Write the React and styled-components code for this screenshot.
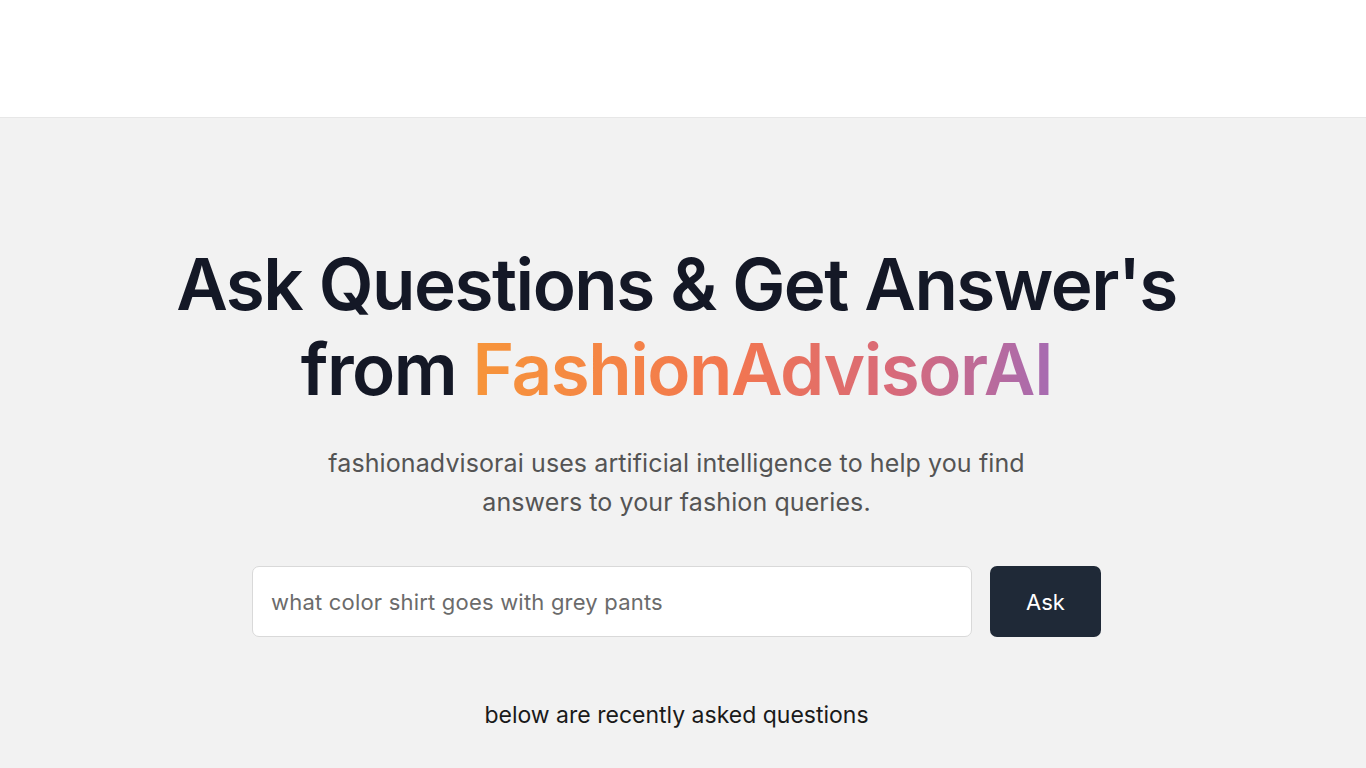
import React from 'react'
import styled, { createGlobalStyle } from 'styled-components'

const GlobalStyle = createGlobalStyle`
  html, body {
    margin: 0;
    padding: 0;
    background: #f2f2f2;
    font-family: Inter, 'Open Sans', sans-serif;
  }
`

const Header = styled.header`
  height: 117px;
  background: #ffffff;
  border-bottom: 1px solid #e7e7e7;
`

const Main = styled.main`
  display: flex;
  flex-direction: column;
  align-items: center;
  padding: 124px 13px 0 0;
`

const Title = styled.h1`
  margin: 0;
  font-size: 71px;
  line-height: 85px;
  font-weight: 600;
  letter-spacing: -1.5px;
  color: #141826;
  text-align: center;
`

const Gradient = styled.span`
  background: linear-gradient(90deg, #f7953a 0%, #f27650 45%, #d96a78 72%, #a66bb2 100%);
  -webkit-background-clip: text;
  background-clip: text;
  color: transparent;
`

const Subtitle = styled.p`
  margin: 32px 0 0;
  max-width: 720px;
  font-size: 25px;
  line-height: 39px;
  font-weight: 400;
  color: #545454;
  text-align: center;
  letter-spacing: 0.1px;
`

const Form = styled.form`
  display: flex;
  gap: 18px;
  margin-top: 44px;
`

const Input = styled.input`
  box-sizing: border-box;
  width: 720px;
  height: 71px;
  padding: 0 18px;
  border: 1px solid #d9d9d9;
  border-radius: 7px;
  background: #ffffff;
  font-family: inherit;
  font-size: 22px;
  letter-spacing: 0.2px;
  color: #333;
  outline: none;

  &::placeholder {
    color: #6b6b6b;
  }
`

const Button = styled.button`
  width: 111px;
  height: 71px;
  border: none;
  border-radius: 7px;
  background: #1f2937;
  color: #ffffff;
  font-family: inherit;
  font-size: 22px;
  font-weight: 400;
  cursor: pointer;
`

const Recent = styled.p`
  margin: 64px 0 0;
  font-size: 23px;
  color: #1a1a1a;
`

export default function App() {
  return (
    <>
      <GlobalStyle />
      <Header />
      <Main>
        <Title>
          Ask Questions &amp; Get Answer's
          <br />
          from <Gradient>FashionAdvisorAI</Gradient>
        </Title>
        <Subtitle>
          fashionadvisorai uses artificial intelligence to help you find
          answers to your fashion queries.
        </Subtitle>
        <Form onSubmit={(e) => e.preventDefault()}>
          <Input placeholder="what color shirt goes with grey pants" />
          <Button type="submit">Ask</Button>
        </Form>
        <Recent>below are recently asked questions</Recent>
      </Main>
    </>
  )
}
